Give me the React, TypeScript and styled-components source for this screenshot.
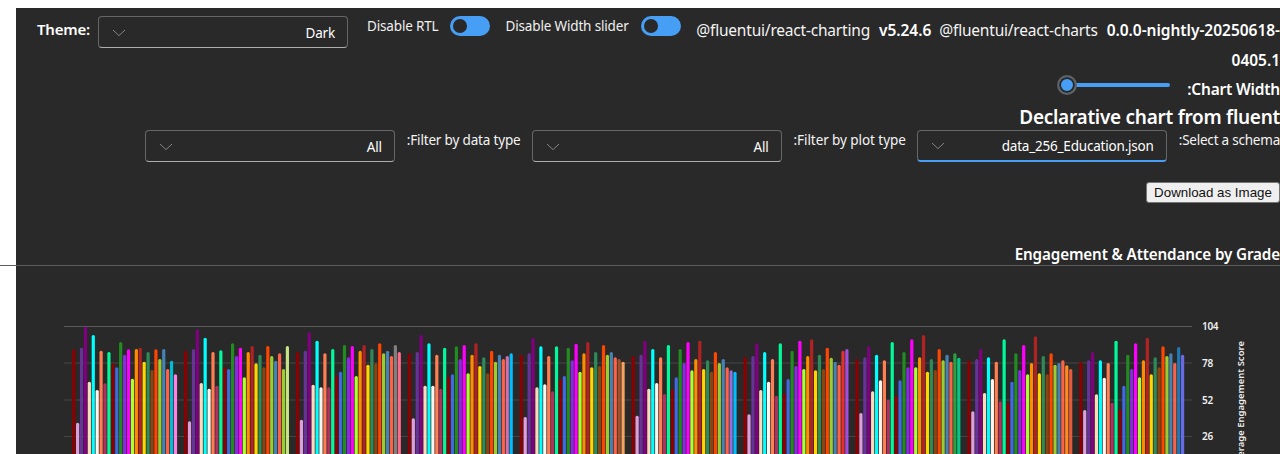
import React from "react";
import styled, { createGlobalStyle } from "styled-components";

const Global = createGlobalStyle`
  html, body { margin: 0; padding: 0; background: #fff; height: 454px; overflow: hidden; }
  body { font-family: "Noto Sans", "Open Sans", sans-serif; }
`;

const Panel = styled.main`
  margin: 8px 0 0 16px;
  height: 446px;
  background: #292929;
  color: #fff;
  font-size: 14px;
`;

const TopRow = styled.div`
  display: flex;
  align-items: flex-start;
  height: 59px;
  padding-top: 8px;
  box-sizing: content-box;
`;

const ThemeField = styled.div`
  display: flex;
  align-items: flex-start;
  margin-left: 21px;
  gap: 8px;
`;

const ThemeLabel = styled.label`
  font-size: 15px;
  font-weight: 600;
  line-height: 26px;
  letter-spacing: -0.2px;
`;

const SwitchField = styled.div<{ $ml: number; $gap: number }>`
  display: flex;
  align-items: flex-start;
  margin-left: ${(p) => p.$ml}px;
  gap: ${(p) => p.$gap}px;
`;

const SwitchLabel = styled.span`
  font-size: 13.5px;
  line-height: 20px;
  letter-spacing: -0.16px;
  color: #f0f0f0;
`;

const SwitchTrack = styled.span`
  display: flex;
  align-items: center;
  width: 40px;
  height: 20px;
  border-radius: 10px;
  background: #479ef5;
  padding-left: 3px;
  box-sizing: border-box;
`;

const SwitchThumb = styled.span`
  width: 14px;
  height: 14px;
  border-radius: 50%;
  background: #292929;
`;

const Versions = styled.div`
  margin-left: auto;
  margin-top: -1px;
  width: 595px;
  text-align: right;
  white-space: nowrap;
  font-size: 15.5px;
  line-height: 30px;
  letter-spacing: -0.2px;
  color: #f4f4f4;
`;

const VersionName = styled.span`
  margin-left: 8px;
`;

const VersionNumber = styled.b`
  font-weight: 600;
  margin-left: 9px;
  letter-spacing: -0.03px;
  color: #fff;
`;

const RtlSection = styled.div`
  direction: rtl;
`;

const SliderRow = styled.div`
  display: flex;
  align-items: flex-start;
  height: 29px;
  gap: 17px;
`;

const BoldLabel = styled.label`
  font-size: 15.5px;
  font-weight: 600;
  line-height: 28px;
  letter-spacing: -0.2px;
`;

const SliderTrack = styled.span`
  display: flex;
  align-items: center;
  width: 113px;
  height: 20px;
`;

const SliderFill = styled.span`
  flex: 1;
  height: 4px;
  background: #479ef5;
  border-radius: 2px;
`;

const SliderThumb = styled.span`
  width: 20px;
  height: 20px;
  box-sizing: border-box;
  border-radius: 50%;
  background: #479ef5;
  border: 2px solid #616161;
  box-shadow: inset 0 0 0 2px #292929;
  margin-right: -10px;
`;

const Heading = styled.h2`
  margin: 0;
  font-size: 19px;
  font-weight: 600;
  line-height: 26px;
  height: 26px;
  letter-spacing: -0.27px;
`;

const FilterRow = styled.div`
  display: flex;
  align-items: flex-start;
  height: 32px;
`;

const FilterLabel = styled.label<{ $mr?: number; $ls: number }>`
  font-size: 13.5px;
  line-height: 20px;
  letter-spacing: ${(p) => p.$ls}px;
  margin-left: 12px;
  margin-right: ${(p) => p.$mr ?? 0}px;
  color: #f4f4f4;
`;

const Select = styled.div<{ $active?: boolean }>`
  direction: rtl;
  display: flex;
  align-items: center;
  justify-content: space-between;
  width: 250px;
  height: 32px;
  box-sizing: border-box;
  border: 1px solid #666;
  border-bottom: ${(p) => (p.$active ? "2px solid #479ef5" : "1px solid #adadad")};
  border-radius: 4px;
  padding: 1px 12px 0 13px;
  font-size: 13.5px;
  letter-spacing: -0.2px;
  color: #fff;
`;

const Chevron = () => (
  <svg width="14" height="8" viewBox="0 0 14 8" fill="none" aria-hidden>
    <path d="M1 1 L7 6.6 L13 1" stroke="#858585" strokeWidth="1" />
  </svg>
);

const ButtonRow = styled.div`
  display: flex;
  padding-top: 20px;
  height: 21px;
`;

const DownloadButton = styled.button`
  width: 134px;
  height: 21px;
  padding: 0;
  direction: ltr;
  font: 13.33px/1 "Liberation Sans", Arial, sans-serif;
  color: #111;
  background: #efefef;
  border: 1px solid #767676;
  border-radius: 3px;
`;

const ChartTitle = styled.div`
  margin-top: 39px;
  height: 23px;
  font-size: 15.2px;
  font-weight: 600;
  line-height: 24px;
  letter-spacing: -0.12px;
`;

const Divider = styled.hr`
  margin: 0 0 0 -16px;
  height: 1px;
  border: 0;
  background: #5c5c5c;
`;

const ChartSvg = styled.svg`
  display: block;
  width: 1264px;
  height: 188px;
`;

const TickLabel = styled.text`
  font-size: 10px;
  font-weight: 600;
  letter-spacing: -0.3px;
  fill: #f0f0f0;
`;

const AxisTitle = styled.text`
  font-size: 9.5px;
  font-weight: 600;
  fill: #f0f0f0;
  text-anchor: end;
`;

const baseColors = [
  "#8b0000", "#dda0dd", "#663399", "#800080", "#ffdab9", "#00ffff", "#fff5ee",
  "#ff7f50", "#b03060", "#00fa9a", "#8b0000", "#4169e1", "#228b22", "#8a2be2",
  "#ff00ff", "#adff2f", "#ff8c00", "#b22222", "#ffd700", "#2e8b57", "#8b4513",
  "#ff4500", "#9acd32", "#4682b4", "#ff6347",
];

const lastColors = [
  ["#00bcd4", "#ff80e0"],
  ["#9acd32", "#c5e384"],
  ["#808080", "#ff6b8b"],
  ["#d070b0", "#00bfff"],
  ["#a0522d", "#f4a460"],
  ["#9370db", "#00bfff"],
  ["#e03030", "#a050e0"],
  ["#2e9e3e", "#00c98a"],
  ["#ff8c20", "#e85a40"],
  ["#1f77b4", "#6a6ae8"],
];

const tops = [
  [88,308,83,20,185,45,210,92,190,96,130,142,66,104,88,176,87,83,125,96,150,88,117,87,147,122,163],
  [92,304,87,28,189,53,206,96,197,91,142,147,70,108,83,172,96,78,130,104,142,78,108,122,100,147,78],
  [96,299,92,37,194,62,202,100,202,87,165,155,75,112,78,168,92,75,134,87,130,70,100,92,108,75,96],
  [100,295,96,45,197,70,197,104,206,83,170,163,79,117,75,160,104,70,138,112,160,92,125,104,117,108,100],
  [104,291,100,54,202,79,193,108,214,79,177,168,83,121,71,155,100,66,142,96,138,75,104,96,112,117,125],
  [108,287,104,62,206,87,189,112,222,75,207,172,87,129,66,151,117,62,147,121,155,96,129,117,142,151,155],
  [112,283,108,70,210,96,185,117,227,70,220,177,92,138,62,147,108,58,151,104,147,83,113,125,134,92,87],
  [117,279,112,79,214,104,181,121,239,66,227,181,96,142,58,142,112,45,155,117,150,87,121,104,125,100,113],
  [121,274,117,87,219,112,177,125,244,58,248,185,100,150,75,163,129,49,160,108,163,100,134,129,121,136,147],
  [125,270,121,96,223,121,173,129,248,62,268,197,104,147,70,172,121,53,163,112,142,79,108,100,129,81,104],
];

const ticks = [
  { y: 326.5, label: "104", color: "#5a5a5a" },
  { y: 363, label: "78", color: "#464646" },
  { y: 400, label: "52", color: "#464646" },
  { y: 436.5, label: "26", color: "#464646" },
];

const Chart = () => (
  <ChartSvg viewBox="16 266 1264 188">
    {ticks.map((t) => (
      <g key={t.label}>
        <line x1="64" x2="1192" y1={t.y} y2={t.y} stroke={t.color} strokeWidth="1" />
        <TickLabel x="1202" y={t.y + 3.5}>{t.label}</TickLabel>
      </g>
    ))}
    {tops.map((group, g) =>
      group.map((top, i) => (
        <rect
          key={`${g}-${i}`}
          x={73.7 + 111.9 * g + i * 3.915 - 1.6}
          y={320 + top / 3}
          width="3.2"
          height="140"
          rx="1.5"
          fill={i < 25 ? baseColors[i] : lastColors[g][i - 25]}
        />
      )),
    )}
    <AxisTitle transform="translate(1244 341) rotate(-90)">Average Engagement Score</AxisTitle>
  </ChartSvg>
);

export default function App() {
  return (
    <Panel>
      <Global />
      <TopRow>
        <ThemeField>
          <ThemeLabel>Theme:</ThemeLabel>
          <Select>
            <span>Dark</span>
            <Chevron />
          </Select>
        </ThemeField>
        <SwitchField $ml={19} $gap={11}>
          <SwitchLabel>Disable RTL</SwitchLabel>
          <SwitchTrack><SwitchThumb /></SwitchTrack>
        </SwitchField>
        <SwitchField $ml={16} $gap={12}>
          <SwitchLabel>Disable Width slider</SwitchLabel>
          <SwitchTrack><SwitchThumb /></SwitchTrack>
        </SwitchField>
        <Versions>
          <VersionName>@fluentui/react-charting</VersionName>
          <VersionNumber>v5.24.6</VersionNumber>
          <VersionName>@fluentui/react-charts</VersionName>
          <VersionNumber>0.0.0-nightly-20250618-</VersionNumber>
          <br />
          <VersionNumber>0405.1</VersionNumber>
        </Versions>
      </TopRow>
      <RtlSection>
        <SliderRow>
          <BoldLabel>Chart Width:</BoldLabel>
          <SliderTrack>
            <SliderFill />
            <SliderThumb />
          </SliderTrack>
        </SliderRow>
        <Heading>Declarative chart from fluent</Heading>
        <FilterRow>
          <FilterLabel $ls={-0.22}>Select a schema:</FilterLabel>
          <Select $active>
            <span>data_256_Education.json</span>
            <Chevron />
          </Select>
          <FilterLabel $mr={11} $ls={-0.07}>Filter by plot type:</FilterLabel>
          <Select>
            <span>All</span>
            <Chevron />
          </Select>
          <FilterLabel $mr={11} $ls={-0.17}>Filter by data type:</FilterLabel>
          <Select>
            <span>All</span>
            <Chevron />
          </Select>
        </FilterRow>
        <ButtonRow>
          <DownloadButton>Download as Image</DownloadButton>
        </ButtonRow>
        <ChartTitle>Engagement &amp; Attendance by Grade</ChartTitle>
      </RtlSection>
      <Divider />
      <Chart />
    </Panel>
  );
}
